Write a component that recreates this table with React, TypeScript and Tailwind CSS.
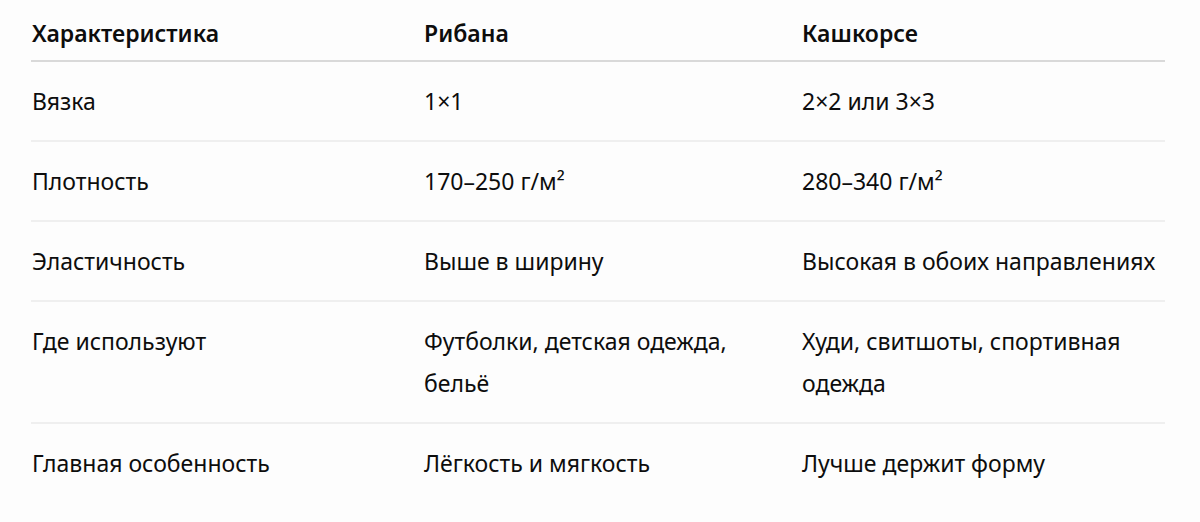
import React from "react";

const rows: [React.ReactNode, React.ReactNode, React.ReactNode][] = [
  ["Вязка", "1×1", "2×2 или 3×3"],
  ["Плотность", "170–250 г/м²", "280–340 г/м²"],
  ["Эластичность", "Выше в ширину", "Высокая в обоих направлениях"],
  [
    "Где используют",
    <>Футболки, детская одежда,<br />бельё</>,
    <>Худи, свитшоты, спортивная<br />одежда</>,
  ],
  ["Главная особенность", "Лёгкость и мягкость", "Лучше держит форму"],
];

export default function App() {
  return (
    <div
      className="min-h-screen w-full bg-[#fdfdfd] text-[#0d0d0d]"
      style={{ fontFamily: '"Noto Sans", "Open Sans", sans-serif' }}
    >
      <div className="ml-[31px] w-[1134px] text-[23px] leading-[42px]">
        {/* header */}
        <div className="grid grid-cols-[393px_378px_1fr] border-b-2 border-[#d9d9d9] pt-[12px] pb-[6px] font-semibold">
          <div className="pl-[1px]">Характеристика</div>
          <div>Рибана</div>
          <div>Кашкорсе</div>
        </div>
        {rows.map((r, i) => (
          <div
            key={i}
            className={`grid grid-cols-[393px_378px_1fr] py-[18px] whitespace-nowrap ${
              i < rows.length - 1 ? "border-b-2 border-[#efefef]" : ""
            }`}
          >
            <div className="pl-[1px]">{r[0]}</div>
            <div>{r[1]}</div>
            <div>{r[2]}</div>
          </div>
        ))}
      </div>
    </div>
  );
}
